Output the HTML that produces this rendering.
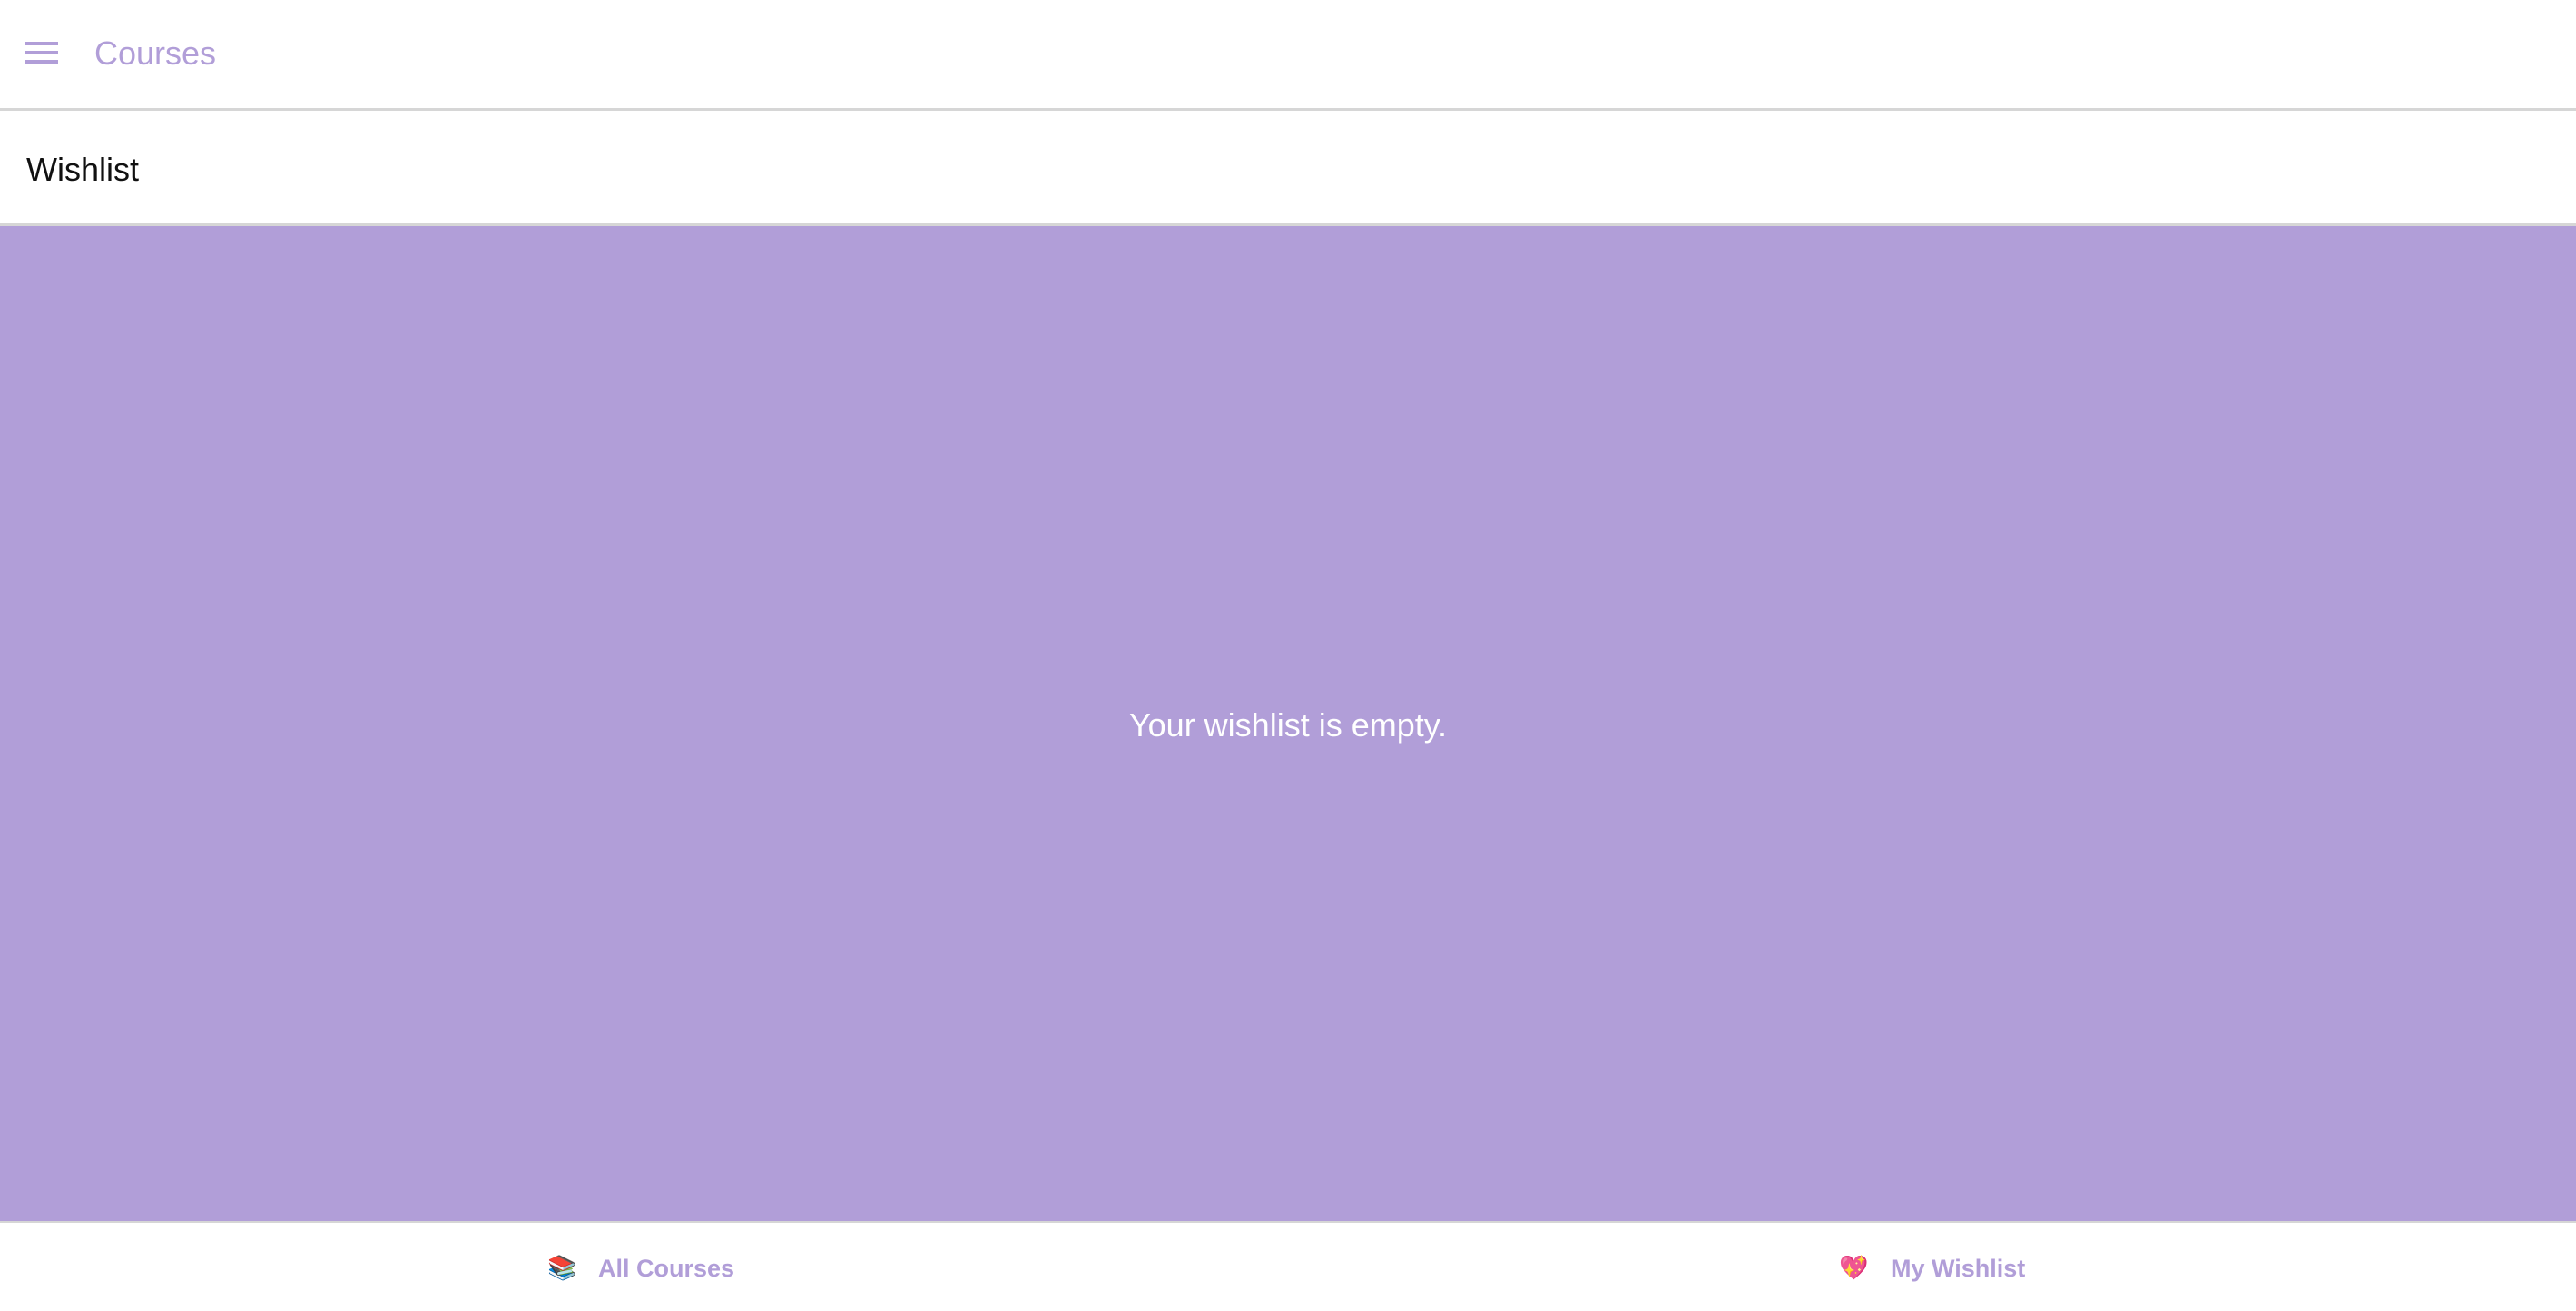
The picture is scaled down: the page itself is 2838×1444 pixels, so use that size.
<!DOCTYPE html>
<html><head><meta charset="utf-8"><style>
*{margin:0;padding:0;box-sizing:border-box}
body{width:2838px;height:1444px;overflow:hidden;background:#fff;font-family:"Liberation Sans",sans-serif;position:relative}
.hdr{position:absolute;left:0;top:0;width:2838px;height:122px;border-bottom:3px solid #d6d6d6;background:#fff}
.ham{position:absolute;left:28px;top:46px;width:36px;height:24px}
.ham i{position:absolute;left:0;width:36px;height:4px;background:#b19ed8}
.title{position:absolute;left:104px;top:38px;font-size:36px;color:#b19ed8;line-height:42px}
.sub{position:absolute;left:0;top:122px;width:2838px;height:127px;border-bottom:3px solid #d6d6d6}
.sub span{position:absolute;left:29px;top:164px;font-size:36px;color:#111;line-height:42px}
.main{position:absolute;left:0;top:249px;width:2838px;height:1098px;background:#b19ed8;border-bottom:2px solid #d6d6d6}
.msg{position:absolute;left:0;width:2838px;top:778px;text-align:center;color:#fff;font-size:36px;line-height:42px}
.tab{position:absolute;top:1380px;font-size:27px;font-weight:bold;color:#b19ed8;line-height:34px}
.em{position:absolute;top:1380px;font-size:26px;line-height:34px;font-family:"Noto Color Emoji",sans-serif}
</style></head><body>
<div class="hdr"><div class="ham"><i style="top:0"></i><i style="top:10px"></i><i style="top:20px"></i></div><div class="title">Courses</div></div>
<div class="sub"></div>
<div style="position:absolute;left:29px;top:166px;font-size:36px;color:#111;line-height:42px">Wishlist</div>
<div class="main"></div>
<div class="msg">Your wishlist is empty.</div>
<div class="em" style="left:603px">📚</div>
<div class="tab" style="left:659px">All Courses</div>
<div class="em" style="left:2026px">💖</div>
<div class="tab" style="left:2083px">My Wishlist</div>
</body></html>
